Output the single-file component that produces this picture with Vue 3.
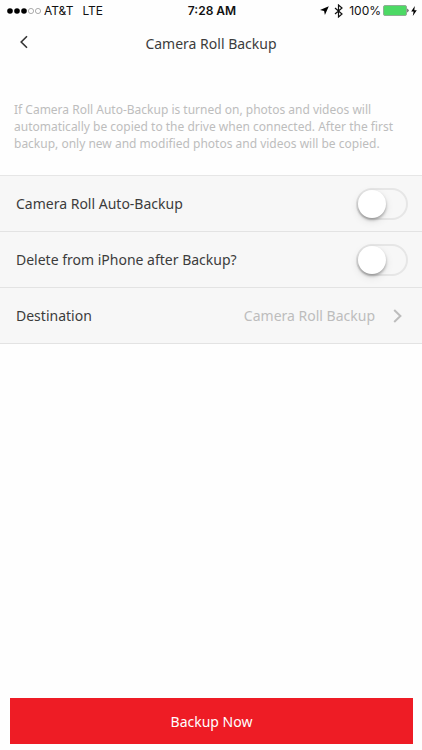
<script setup>
import { ref } from 'vue'

const autoBackup = ref(false)
const deleteAfter = ref(false)
const destination = ref('Camera Roll Backup')
</script>

<template>
  <div class="screen">
    <div class="status">
      <div class="status-side">
        <svg class="signal" width="36" height="8" viewBox="0 0 36 8" aria-hidden="true">
          <circle cx="3" cy="4" r="2.8" />
          <circle cx="10" cy="4" r="2.8" />
          <circle cx="17" cy="4" r="2.8" />
          <circle class="hollow" cx="24" cy="4" r="2.6" />
          <circle class="hollow" cx="31" cy="4" r="2.6" />
        </svg>
        <span class="carrier">AT&amp;T</span>
        <span>LTE</span>
      </div>
      <span class="time">7:28 AM</span>
      <div class="status-side right">
        <svg width="9" height="9" viewBox="0 0 9 9" aria-hidden="true">
          <path d="M8.8 0.2 0 4.1 4.1 4.9 4.9 9Z" />
        </svg>
        <svg class="bluetooth" width="9" height="14" viewBox="0 0 9 14" aria-hidden="true">
          <path d="M1 4 8 10 4.5 13V1L8 4 1 10" />
        </svg>
        <span class="percent">100%</span>
        <svg class="battery" width="26" height="11" viewBox="0 0 26 11" aria-hidden="true">
          <rect x="0.5" y="0.5" width="23" height="10" rx="1.5" />
          <path d="M24.5 3.6Q26.4 5.5 24.5 7.4Z" />
        </svg>
        <svg width="6" height="10" viewBox="0 0 6 10" aria-hidden="true">
          <path d="M3.8 0 0.2 5.4H2.6L1.8 10 5.8 4.2H3.3Z" />
        </svg>
      </div>
    </div>

    <header class="nav">
      <button class="back" type="button" aria-label="Back">
        <svg width="8" height="14" viewBox="0 0 8 14" aria-hidden="true">
          <path d="M7 1.2 1.2 7 7 12.8" />
        </svg>
      </button>
      <h1>Camera Roll Backup</h1>
    </header>

    <main>
      <p class="intro">
        If Camera Roll Auto-Backup is turned on, photos and videos will<br />
        automatically be copied to the drive when connected. After the first<br />
        backup, only new and modified photos and videos will be copied.
      </p>

      <div class="list">
        <label class="row">
          <span>Camera Roll Auto-Backup</span>
          <input v-model="autoBackup" class="switch" type="checkbox" role="switch" />
        </label>
        <label class="row">
          <span>Delete from iPhone after Backup?</span>
          <input v-model="deleteAfter" class="switch" type="checkbox" role="switch" />
        </label>
        <button class="row" type="button">
          <span>Destination</span>
          <span class="value">{{ destination }}</span>
          <svg class="chevron" width="9" height="14" viewBox="0 0 9 14" aria-hidden="true">
            <path d="M1.2 1 7.4 7 1.2 13" />
          </svg>
        </button>
      </div>
    </main>

    <footer>
      <button class="primary" type="button">Backup Now</button>
    </footer>
  </div>
</template>

<style>
body {
  margin: 0;
  background: #fefefe;
}
</style>

<style scoped>
.screen {
  display: flex;
  flex-direction: column;
  min-height: 100vh;
  color: #3c3c3c;
  font-family: "Noto Sans", sans-serif;
  font-size: 14px;
}

button {
  margin: 0;
  padding: 0;
  border: 0;
  background: none;
  color: inherit;
  font: inherit;
}

.status {
  display: grid;
  grid-template-columns: 1fr auto 1fr;
  align-items: center;
  height: 21px;
  padding: 0 5px 0 7px;
  color: #111;
  font-family: Inter, sans-serif;
  font-size: 12px;
}

.status-side {
  display: flex;
  align-items: center;
}

.right {
  justify-content: flex-end;
}

.signal {
  margin-right: 1px;
}

.hollow {
  fill: none;
  stroke: #777;
  stroke-width: 0.6;
}

.carrier {
  margin-right: 9px;
}

.time {
  font-weight: 600;
}

.bluetooth {
  margin: 0 6px 0 5px;
  fill: none;
  stroke: #111;
  stroke-width: 1.2;
}

.percent {
  margin-right: 2px;
}

.battery {
  margin-right: 2px;
}

.battery rect {
  fill: #4cd964;
  stroke: #8fae94;
  stroke-width: 1;
}

.nav {
  display: grid;
  grid-template-columns: 48px 1fr 48px;
  align-items: center;
  height: 44px;
}

.back {
  display: flex;
  align-items: center;
  justify-content: center;
  height: 40px;
  padding-bottom: 3px;
}

.back svg,
.chevron {
  fill: none;
  stroke: #333;
  stroke-width: 1.6;
}

h1 {
  margin: 0;
  font-size: 14px;
  font-weight: 400;
  text-align: center;
}

main {
  flex: 1;
}

.intro {
  margin: 0;
  padding: 36px 14px 23px;
  color: #bdbdbd;
  font-size: 12px;
  line-height: 17px;
  white-space: nowrap;
}

.list {
  border-top: 1px solid #e6e6e6;
  background: #f7f7f7;
}

.row {
  display: flex;
  align-items: center;
  justify-content: space-between;
  box-sizing: border-box;
  width: 100%;
  height: 56px;
  padding: 0 14px 0 16px;
  border-bottom: 1px solid #e3e3e3;
}

.switch {
  appearance: none;
  box-sizing: border-box;
  width: 52px;
  height: 32px;
  margin: 0;
  padding: 0;
  border: 2px solid #e6e6e6;
  border-radius: 16px;
}

.switch::before {
  content: "";
  display: block;
  width: 28px;
  height: 28px;
  border-radius: 50%;
  background: #fff;
  box-shadow: 0 2px 3px rgba(0, 0, 0, 0.3), 0 3px 8px rgba(0, 0, 0, 0.1);
}

.switch:checked {
  background: #4cd964;
}

.switch:checked::before {
  margin-left: 20px;
}

.value {
  margin-left: auto;
  color: #bdbdbd;
}

.chevron {
  margin: 0 6px 0 18px;
  stroke: #bdbdbd;
  stroke-width: 2;
}

footer {
  padding: 0 9px 6px 10px;
}

.primary {
  width: 100%;
  height: 46px;
  background: #ee1c25;
  color: #fff;
}
</style>
